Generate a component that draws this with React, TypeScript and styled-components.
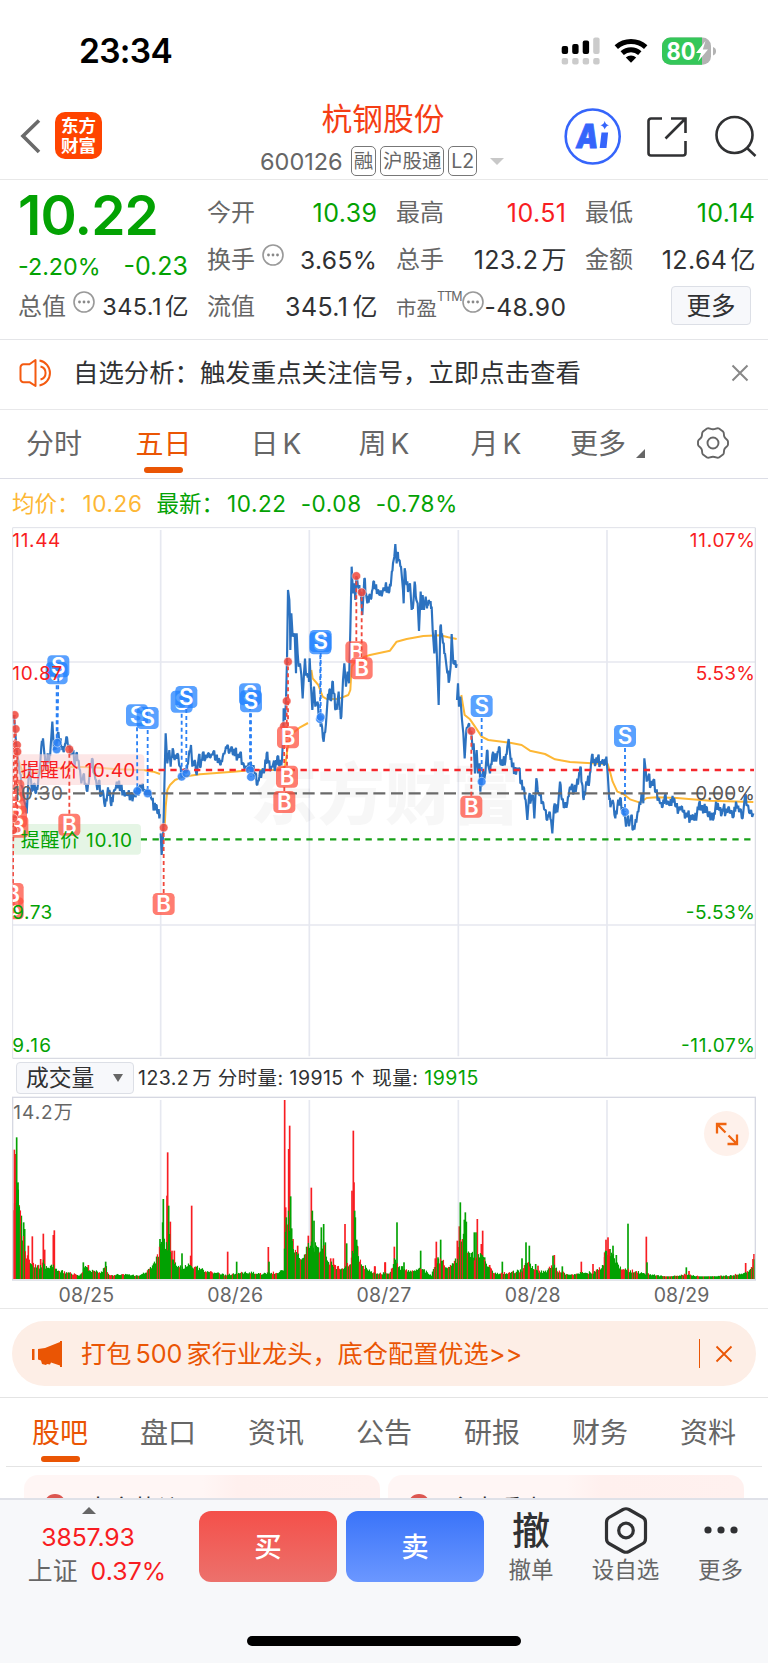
import React from 'react';
import styled, { createGlobalStyle, css } from 'styled-components';

const GREEN = '#03a203';
const RED = '#f81d22';
const ORANGE = '#ea5504';
const INK = '#303133';
const GREY = '#666';

const GlobalStyle = createGlobalStyle`
  body { margin: 0; background: #fff; }
  * { box-sizing: border-box; }
  body, text { font-family: Inter, "Noto Sans CJK SC", sans-serif; }
`;

const Page = styled.div`
  width: 768px;
  height: 1663px;
  overflow: hidden;
  display: flex;
  flex-direction: column;
  color: ${INK};
`;

/* ---------- status bar ---------- */
const StatusBar = styled.div`
  height: 90px;
  padding: 12px 51px 0 79px;
  display: flex;
  align-items: center;
  justify-content: space-between;
`;
const Clock = styled.span`
  font-size: 33.5px;
  font-weight: 600;
  line-height: 40px;
  letter-spacing: -0.7px;
  color: #000;
`;

/* ---------- header ---------- */
const Header = styled.header`
  height: 90px;
  border-bottom: 1px solid #e8e8e8;
  display: grid;
  grid-template-columns: 210px 346px 1fr;
`;
const HeaderLeft = styled.div`
  padding: 22px 0 0 20px;
  display: flex;
  align-items: flex-start;
  gap: 14px;
`;
const Logo = styled.div`
  width: 47px;
  height: 47px;
  border-radius: 10px;
  background: #ff4400;
  color: #fff;
  font-size: 17.5px;
  font-weight: 700;
  line-height: 19.5px;
  text-align: center;
  padding-top: 4px;
`;
const TitleBlock = styled.div`
  display: flex;
  flex-direction: column;
  align-items: center;
  padding-top: 10px;
`;
const Title = styled.h1`
  margin: 0;
  font-size: 30.7px;
  line-height: 38px;
  font-weight: 400;
  color: #f53d14;
`;
const CodeRow = styled.div`
  display: flex;
  align-items: center;
  gap: 4px;
  height: 30px;
  margin: 8px 2px 0 0;
  color: ${GREY};
`;
const Code = styled.span`
  font-size: 23.5px;
  margin-right: 4px;
`;
const Tag = styled.span`
  height: 30px;
  line-height: 28px;
  padding: 0 2px;
  border: 1px solid #777;
  border-radius: 5px;
  font-size: 19.5px;
  letter-spacing: -0.1px;
`;
const Caret = styled.i`
  width: 0;
  height: 0;
  margin-left: 9px;
  border: 7px solid transparent;
  border-top-color: #c8c8c8;
  border-bottom: 0;
`;
const HeaderActions = styled.div`
  padding: 18px 11px 0 8px;
  display: flex;
  align-items: flex-start;
`;

/* ---------- quote ---------- */
const Quote = styled.section`
  height: 160px;
  border-bottom: 1px solid #e4e5e8;
  padding: 0 13px 0 18px;
  display: grid;
  grid-template-columns: 170px 170px 170px 170px;
  column-gap: 19px;
`;
const Main = styled.div`
  display: flex;
  flex-direction: column;
`;
const Price = styled.div`
  height: 60px;
  margin-top: 5px;
  font-size: 55px;
  line-height: 60px;
  font-weight: 600;
  letter-spacing: -0.8px;
  color: ${GREEN};
`;
const Change = styled.div`
  display: flex;
  justify-content: space-between;
  align-items: center;
  height: 34px;
  margin-top: 4px;
  color: ${GREEN};
  font-size: 23.3px;
  span + span { font-size: 25px; }
`;
const Column = styled.div`
  padding-top: 9px;
`;
const Stat = styled.div`
  height: 47px;
  display: flex;
  align-items: center;
  white-space: nowrap;
`;
const StatLabel = styled.span<{ $small?: boolean }>`
  font-size: ${(p) => (p.$small ? 20.5 : 24)}px;
  line-height: 30px;
  color: ${GREY};
  ${(p) => p.$small && css`padding-top: 5px;`}
`;
const StatValue = styled.span<{ $color?: string; $size?: number }>`
  margin-left: auto;
  margin-right: -0.4px;
  font-size: ${(p) => p.$size ?? 25}px;
  line-height: 30px;
  letter-spacing: 0.4px;
  color: ${(p) => p.$color ?? INK};
`;
const Unit = styled.span<{ $gap?: number }>`
  margin-left: ${(p) => p.$gap ?? 3}px;
  letter-spacing: 0;
`;
const Sup = styled.sup`
  font-size: 12.5px;
  letter-spacing: -0.9px;
  line-height: 14px;
  align-self: flex-start;
  margin-top: 7px;
  color: ${GREY};
`;
const MoreButton = styled.button`
  display: block;
  width: 80px;
  height: 39px;
  margin: 3px 4px 0 auto;
  padding: 0;
  border: 1px solid #dcdfe6;
  border-radius: 4px;
  background: #f7f8fb;
  color: ${INK};
  font: 400 24.5px/36px Inter, "Noto Sans CJK SC", sans-serif;
`;

/* ---------- notice ---------- */
const Notice = styled.section`
  height: 70px;
  border-bottom: 1px solid #e8e8ea;
  padding: 0 19px 3px 19px;
  display: flex;
  align-items: center;
`;
const NoticeText = styled.span`
  margin-left: 19px;
  flex: 1;
  font-size: 25.4px;
  line-height: 32px;
`;

/* ---------- tabs ---------- */
const PeriodTabs = styled.nav`
  height: 69px;
  border-bottom: 1px solid #dcdde6;
  display: grid;
  grid-template-columns: 108px 111px 114px 102px 122px 101px 110px;
`;
const SectionTabs = styled.nav`
  height: 69px;
  margin: 0 6px;
  border-bottom: 1px solid #e4e4e4;
  display: grid;
  grid-template-columns: repeat(7, 108px);
`;
const Tab = styled.div<{ $active?: boolean; $drop?: number }>`
  display: flex;
  flex-direction: column;
  align-items: center;
  padding-top: ${(p) => 15 + (p.$drop ?? 0)}px;
  font-size: 28px;
  line-height: 38px;
  color: ${(p) => (p.$active ? ORANGE : GREY)};
  &::after {
    content: '';
    width: 39px;
    height: 6px;
    border-radius: 3px;
    margin-top: 4px;
    background: ${(p) => (p.$active ? ORANGE : 'transparent')};
  }
`;
const MoreTab = styled.div`
  display: flex;
  align-items: flex-start;
  padding: 15px 0 0 13px;
  font-size: 28px;
  line-height: 38px;
  color: ${GREY};
`;
const Corner = styled.i`
  margin: 24px 0 0 10px;
  border-left: 9px solid transparent;
  border-bottom: 9px solid ${GREY};
`;
const GearCell = styled.div`
  display: flex;
  justify-content: center;
  padding-top: 16px;
`;

/* ---------- chart area ---------- */
const Legend = styled.div`
  height: 48px;
  padding: 1px 0 0 12px;
  display: flex;
  align-items: center;
  font-size: 22.5px;
  line-height: 30px;
  color: ${GREEN};
`;
const LegendItem = styled.span<{ $gap: number; $color?: string }>`
  margin-right: ${(p) => p.$gap}px;
  letter-spacing: 0.6px;
  color: ${(p) => p.$color ?? GREEN};
`;
const LegendLabel = styled(LegendItem)`
  letter-spacing: 0;
`;
const ChartWrap = styled.div<{ $h: number }>`
  height: ${(p) => p.$h}px;
  position: relative;
  svg { display: block; }
`;
const VolumeHead = styled.div`
  height: 37px;
  padding: 3px 16px 2px;
  display: flex;
  align-items: center;
  white-space: pre;
  font-size: 19.5px;
  line-height: 28px;
  letter-spacing: 0.45px;
`;
const VolumeSelect = styled.div`
  width: 118px;
  height: 32px;
  margin-right: 4px;
  padding: 0 10px 1px 9px;
  display: flex;
  align-items: center;
  justify-content: space-between;
  border: 1px solid #dcdfe6;
  border-radius: 4px;
  background: #f7f8fb;
  font-size: 22.8px;
  letter-spacing: 0;
`;
const SmallCaret = styled.i`
  border: 5px solid transparent;
  border-top: 8px solid ${GREY};
  border-bottom: 0;
`;
const ExpandButton = styled.div`
  position: absolute;
  right: 19px;
  top: 15px;
  width: 45px;
  height: 45px;
  border-radius: 50%;
  background: #fef1eb;
  display: grid;
  place-items: center;
`;
const Dates = styled.div`
  height: 28px;
  padding: 0 12px;
  border-bottom: 1px solid #e8e8e8;
  display: grid;
  grid-template-columns: repeat(5, 1fr);
  font-size: 19.5px;
  letter-spacing: 0.1px;
  line-height: 28px;
  text-align: center;
  color: ${GREY};
`;

/* ---------- promo ---------- */
const PromoWrap = styled.div`
  height: 89px;
  padding: 12px 12px 11px;
  border-bottom: 1px solid #e4e4e4;
`;
const Promo = styled.div`
  height: 65px;
  border-radius: 33px;
  background: #fdeee6;
  padding: 0 23px 0 19px;
  display: flex;
  align-items: center;
  color: ${ORANGE};
`;
const PromoText = styled.span`
  margin-left: 18px;
  flex: 1;
  font-size: 25.2px;
  line-height: 34px;
`;
const Bar = styled.i`
  width: 1.5px;
  height: 29px;
  margin-right: 15px;
  background: ${ORANGE};
`;

/* ---------- cards ---------- */
const Cards = styled.div`
  height: 31px;
  overflow: hidden;
  padding: 8px 24px 0;
  display: grid;
  grid-template-columns: 1fr 1fr;
  gap: 8px;
`;
const Card = styled.div`
  height: 90px;
  border-radius: 14px;
  background: linear-gradient(90deg, #fff6f5 0%, #fff6f5 50%, #fff0ee 60%, #fff1ef 100%);
  padding: 18px 20px;
  display: flex;
  gap: 20px;
  font-size: 24px;
  line-height: 32px;
  color: ${INK};
`;
const CardDot = styled.i`
  width: 22px;
  height: 22px;
  margin-top: 1px;
  border-radius: 50%;
  background: #dc5650;
`;

/* ---------- bottom bar ---------- */
const Bottom = styled.footer`
  height: 165px;
  border-top: 2px solid #dfe1e8;
  background: #f7f8fa;
  display: flex;
  flex-direction: column;
`;
const Actions = styled.div`
  height: 136px;
  display: grid;
  grid-template-columns: 199px 138px 147px 94px 95px 1fr;
`;
const IndexBox = styled.div`
  padding: 7px 5px 0 0;
  display: flex;
  flex-direction: column;
  align-items: center;
  color: ${RED};
  font-size: 24.8px;
  line-height: 34px;
`;
const UpCaret = styled.i`
  margin: 0 17px 6px 0;
  border: 7px solid transparent;
  border-bottom-color: ${GREY};
  border-top: 0;
`;
const IndexValue = styled.span`
  margin-right: 18px;
  height: 34px;
  letter-spacing: -0.1px;
`;
const IndexLine = styled.div`
  display: flex;
  gap: 13px;
  letter-spacing: 0.1px;
  b { font-weight: 400; color: ${GREY}; }
`;
const Trade = styled.button<{ $buy?: boolean }>`
  height: 71px;
  margin: 11px 0 0 ${(p) => (p.$buy ? 0 : 9)}px;
  width: 138px;
  border: 0;
  padding: 1px 0 0;
  border-radius: 12px;
  color: #fff;
  font: 500 27.5px/70px Inter, "Noto Sans CJK SC", sans-serif;
  background: ${(p) =>
    p.$buy ? 'linear-gradient(#f4504a, #ec716c)' : 'linear-gradient(#3a74f9, #6b97ff)'};
`;
const Tool = styled.div`
  display: flex;
  flex-direction: column;
  align-items: center;
  padding-top: 6px;
  font-size: 22.5px;
  line-height: 32px;
  color: ${GREY};
`;
const ToolIcon = styled.div`
  height: 48px;
  display: flex;
  align-items: center;
  font-size: 38px;
  font-weight: 500;
  color: ${INK};
`;
const HomeIndicator = styled.div`
  width: 274px;
  height: 10px;
  border-radius: 5px;
  background: #000;
  align-self: center;
`;

/* ---------- chart data ---------- */
type Pt = [number, number];
const parse = (s: string, dx = 0, dy = 0): Pt[] =>
  s.trim().split(/\s+/).map((p) => {
    const [x, y] = p.split(',').map(Number);
    return [x + dx, y + dy];
  });

const priceDays: Pt[][] = [
  parse('42,585 46,640 50,690 54,720 60,760 66,800 75,850 80,880 88,730 92,770 96,815 102,790 108,820 114,790 120,740 124,680 129,655 133,700 138,750 143,700 147,730 152,680 157,605 162,690 168,680 173,640 180,660 186,685 193,690 199,650 206,680 214,700 220,690 224,740 229,700 234,720 240,750 244,790 250,765 256,790 262,815 268,770 276,715 282,760 288,780 292,810 297,780 302,830 308,810 315,860 322,820 328,810 334,858 340,820 348,800 355,790 362,805 370,815 376,825 384,820 392,832 400,828 410,815 418,810 426,795 433,812 440,820 448,810 456,840 463,865 468,855 474,880 480,882'),
  parse('482,940 485,1005 489,950 491,890 494,760 497,640 502,730 508,690 512,740 518,685 524,720 532,700 540,740 546,770 552,750 560,755 566,710 573,675 577,740 584,720 590,765 597,705 602,740 608,700 616,718 624,700 632,712 640,695 648,718 656,715 662,735 668,712 676,690 682,675 688,700 694,680 700,705 706,690 712,715 720,700 728,730 736,745 744,740 750,735 758,745 766,760 772,795 778,770 786,755 794,750 800,700 806,725 812,750 820,730 826,745 832,710 840,735 846,720 850,640 851,565 855,600 858,540 861,420 864,210 868,240 870,300 871,390 874,280 878,350 884,340 888,460 890,340 893,400 896,440 900,430 904,465 908,535 912,460 915,416 918,466 926,466 927,486 929,415 933,500 937,570 942,500 946,560 952,545 958,600 964,610 971,665 978,610 982,550 988,510 994,540 997,485 1002,520 1007,570 1012,550 1016,515 1019,570 1024,590 1029,480 1033,430 1038,500 1043,455 1047,490 1051,330 1055,140 1059,220 1063,190 1066,240 1069,170 1076,205 1082,215 1087,285 1093,175 1098,220 1102,250 1108,225 1114,235 1120,185 1126,205 1133,210 1140,225 1148,215 1156,200 1162,205 1168,215 1174,175 1179,130 1183,110 1186,72 1190,130 1192,100 1197,120 1203,140 1209,210 1211,250 1214,145 1220,195 1226,205 1230,190 1235,270 1240,250 1244,185 1249,240 1253,250 1257,333 1262,215 1265,270 1268,225 1272,270 1277,230 1281,265 1286,240 1290,250 1295,260 1298,330 1303,400 1307,330 1310,390 1316,555 1321,320 1326,340 1329,370 1335,400 1342,460 1348,480 1352,440 1355,342 1360,430 1364,432 1370,432'),
  parse('1371,540 1374,490 1377,560 1381,530 1386,600 1390,640 1394,715 1399,630 1405,615 1412,635'),
];
priceDays[2].push(
  ...parse('34,275 38,330 41,310 45,400 50,330 54,400 59,370 61,455 66,410 76,400 81,330 86,380 90,400 97,345 104,355 111,350 117,320 123,375 130,360 136,365 142,320 146,297 152,360 158,375 164,395 170,390 177,385 183,430 190,440 197,480 202,540 207,470 213,480 219,465 223,535 229,415 235,460 240,465 247,485 255,510 262,540 268,515 273,540 277,580 282,500 288,510 294,500 300,425 306,480 314,500 322,490 328,450 334,440 342,455 350,435 356,415 361,380 366,430 371,480 377,440 383,420 388,425 393,370 396,345 401,365 407,370 414,350 420,375 427,360 434,375 439,350 443,400 448,480 453,495 458,480 466,535 472,500 480,475 487,510 494,520 498,560 503,530 508,555 514,525 519,570 525,555 531,530 537,500 543,480 548,460 550,490 553,355 557,390 560,425 566,405 572,440 580,420 588,455 595,475 602,490 608,500 614,470 622,485 630,495 636,480 641,475 648,500 656,510 664,500 670,515 677,530 684,520 690,540 697,525 704,540 711,520 717,490 724,505 732,510 738,500 746,530 754,525 761,535 766,505 772,490 778,510 786,520 791,500 797,520 804,505 812,515 821,530 828,485 832,505 840,508 848,535 855,465 862,495 870,520 880,520', 1380, 360),
);

const averages: Pt[][] = [
  parse('54,715 60,735 75,775 95,760 150,748 210,740 280,742 350,748 430,750 460,755 480,762'),
  parse('494,920 497,860 502,810 510,795 525,780 550,770 600,763 700,755 760,750 830,750 855,740 862,690 872,645 900,622 924,609'),
  parse('124,450 128,475 145,495 158,530 170,537 200,537 215,533 235,525 241,510 245,440 260,418 300,405 360,392 380,365 410,357 460,348 510,346 535,352 560,357', 810),
  parse('4,165 8,190 14,225 30,238 45,260 65,290 85,300 150,308 185,315 210,332 255,342 285,358 330,366 395,370 437,372 443,372 450,395 458,425 472,455 490,462 510,478 540,488 560,474 590,472 650,474 750,482 880,486', 1380, 360),
];

const rand = (seed: number) => {
  let s = seed;
  return () => {
    s = (s * 16807) % 2147483647;
    return s / 2147483647;
  };
};

/* Fills the gaps between sampled prices with minute-level jitter. */
const jitter = (pts: Pt[], seed: number): Pt[] => {
  const r = rand(seed);
  const out: Pt[] = [];
  pts.forEach((p, i) => {
    out.push(p);
    const n = pts[i + 1];
    if (n && Math.abs(n[1] - p[1]) < 60 && n[0] - p[0] > 4) {
      const a = 4 + r() * 11;
      const w = n[0] - p[0];
      out.push([p[0] + w * 0.33, p[1] * 0.67 + n[1] * 0.33 - a]);
      out.push([p[0] + w * 0.66, p[1] * 0.34 + n[1] * 0.66 + a]);
    }
  });
  return out;
};
const line = (pts: Pt[]) => pts.map((p) => p.map((v) => v.toFixed(1)).join(',')).join(' ');

const volumeEnvelope = [
  ...parse('38,240 50,250 60,190 70,110 80,60 100,45 120,35 130,50 140,30 160,40 170,25 210,18 240,10 255,40 270,25 300,20 318,35 326,10 370,15 410,10 440,20 460,40 480,90 495,110 510,100 520,50 540,35 570,40 600,30 630,20 680,12 740,20 790,15 835,20 850,30 856,160 868,180 880,90 900,60 920,85 935,120 950,80 970,110 980,60 1000,40 1030,25 1055,60 1065,110 1080,50 1100,30 1130,15 1170,20 1184,60 1199,35'),
  ...parse('120,25 160,30 190,12 205,45 220,60 235,35 265,60 275,100 290,130 300,70 325,70 345,65 360,35 385,15 430,20 460,25 480,50 500,25 530,20 557,40 570,25 600,12 640,18 680,20 705,40 715,90 740,60 760,30 800,22 840,15 900,6 955,15 1000,6 1090,10 1130,20 1145,25 1162,60', 1104),
];
const redSpikes = [
  ...parse('43,388 46,375 57,222 60,197 85,100 97,128 122,60 130,136 134,88 160,132 163,146 265,42 501,250 503,380 511,172 516,85 523,85 575,220 572,70 683,82 805,96 854,537 857,215 866,390 869,460 879,120 893,100 925,130 934,274 992,62 1000,62 1035,165 1056,265 1060,445 1062,290 1073,98 1125,38 1156,50'),
  ...parse('20,38 51,50 79,97 205,112 202,62 268,115 274,158 284,120 328,180 340,105 344,145 365,42 510,40 559,72 640,52 675,45 710,80 714,118 720,125 835,127 963,24 1133,48 1155,60 1158,75', 1104),
];
const greenSpikes = [
  ...parse('50,425 54,290 64,190 71,170 74,150 250,50 317,52 480,120 488,170 490,240 506,220 508,135 546,77 710,52 807,52 859,185 872,248 875,152 937,205 942,175 955,95 964,155 971,165 976,110 1040,107 1064,205 1066,185 1070,118 1191,170'),
  ...parse('108,50 158,85 218,118 210,65 277,230 289,178 292,200 295,172 310,78 319,140 324,140 350,65 403,52 462,62 474,110 484,100 503,45 555,70 583,38 726,90 735,100 745,72 780,166 837,50 955,35', 1104),
];

interface VolumeBar { x: number; h: number; up: boolean; }
const envelopeAt = (x: number) => {
  const i = volumeEnvelope.findIndex((p) => p[0] >= x);
  if (i <= 0) return volumeEnvelope[0][1];
  const [a, b] = [volumeEnvelope[i - 1], volumeEnvelope[i]];
  return a[1] + ((b[1] - a[1]) * (x - a[0])) / (b[0] - a[0]);
};
const buildVolume = (): VolumeBar[] => {
  const r = rand(77);
  const bars: VolumeBar[] = [];
  for (let x = 40; x < 2264; x += 3) {
    const up = r() < 0.28;
    bars.push({ x, h: Math.max(8, envelopeAt(x) * (0.8 + r() * 0.42)), up });
  }
  return bars;
};
const volumeBars = buildVolume();

interface Mark { x: number; y: number; dotX: number; dotY: number; }
const sells: Mark[] = [
  { x: 170, y: 460, dotX: 170, dotY: 688 },
  { x: 175, y: 439, dotX: 172, dotY: 668 },
  { x: 411, y: 586, dotX: 412, dotY: 813 },
  { x: 443, y: 594, dotX: 443, dotY: 820 },
  { x: 545, y: 545, dotX: 545, dotY: 770 },
  { x: 559, y: 531, dotX: 559, dotY: 760 },
  { x: 750, y: 523, dotX: 750, dotY: 750 },
  { x: 753, y: 544, dotX: 753, dotY: 771 },
  { x: 961, y: 370, dotX: 960, dotY: 597 },
  { x: 962, y: 363, dotX: 962, dotY: 591 },
  { x: 1445, y: 558, dotX: 1445, dotY: 785 },
  { x: 1875, y: 648, dotX: 1875, dotY: 876 },
];
const buys: Mark[] = [
  { x: 40, y: 812, dotX: 44, dotY: 585 },
  { x: 44, y: 850, dotX: 47, dotY: 627 },
  { x: 48, y: 890, dotX: 51, dotY: 675 },
  { x: 52, y: 920, dotX: 52, dotY: 695 },
  { x: 38, y: 1165, dotX: 40, dotY: 930 },
  { x: 38, y: 1122, dotX: 40, dotY: 895 },
  { x: 208, y: 914, dotX: 208, dotY: 688 },
  { x: 491, y: 1152, dotX: 491, dotY: 923 },
  { x: 853, y: 846, dotX: 852, dotY: 618 },
  { x: 861, y: 770, dotX: 860, dotY: 543 },
  { x: 864, y: 652, dotX: 864, dotY: 425 },
  { x: 1069, y: 397, dotX: 1069, dotY: 168 },
  { x: 1085, y: 445, dotX: 1085, dotY: 217 },
  { x: 1414, y: 860, dotX: 1414, dotY: 633 },
];

const Marker = ({ m, buy }: { m: Mark; buy?: boolean }) => {
  const c = buy ? '#f0483c' : '#2a80f5';
  const end = buy ? m.y - 33 : m.y + 36;
  return (
    <g>
      <line x1={m.x} y1={end} x2={m.dotX} y2={m.dotY} stroke={c} strokeWidth={5.5} strokeDasharray="12 9" />
      <circle cx={m.dotX} cy={m.dotY} r={13} fill={c} fillOpacity={0.85} stroke="#fff" strokeOpacity={0.7} strokeWidth={2} />
      <rect x={m.x - 33} y={m.y - 33} width={66} height={66} rx={13} fill={buy ? '#ff4f40' : '#1f80ff'} fillOpacity={0.74} />
      <text x={m.x} y={m.y + 24} textAnchor="middle" fontSize={67} fontWeight={600} fill="#fff">{buy ? 'B' : 'S'}</text>
    </g>
  );
};

const PriceChart = () => (
  <svg width="768" height="532" viewBox="0 21 2304 1596">
    <defs>
      <clipPath id="plot"><rect x="38" y="24" width="2230" height="1590" /></clipPath>
    </defs>
    <g fill="none" stroke="#e6e8f0" strokeWidth={5}>
      {[482, 928, 1375, 1821].map((x) => <line key={x} x1={x} x2={x} y1={30} y2={1609} />)}
      <path d="M38 426H2266M38 1215H2266" />
    </g>
    <path d="M38 1615V23H2266" fill="none" stroke="#dfe1e8" strokeWidth={3} />
    <path d="M2266 23V1615H38" fill="none" stroke="#d8dae2" strokeWidth={3.5} />
    <text x="750" y="898" fontSize="202" fontWeight="900" fill="#000" fillOpacity="0.03">东方财富</text>
    {averages.map((a, i) => (
      <polyline key={i} points={line(a)} fill="none" stroke="#fdb735" strokeWidth={6} strokeLinejoin="round" />
    ))}
    {priceDays.map((d, i) => (
      <polyline key={i} points={line(jitter(d, 11 + i))} fill="none" stroke="#2c72c0" strokeWidth={6.5} strokeLinejoin="bevel" />
    ))}
    <line x1="60" x2="2200" y1="820" y2="820" stroke="#6a6a6a" strokeWidth={7} strokeDasharray="36 17" />
    <line x1="440" x2="2262" y1="750" y2="750" stroke="#f5282d" strokeWidth={7} strokeDasharray="19 16.5" />
    <line x1="422" x2="2262" y1="958" y2="958" stroke="#18a018" strokeWidth={7} strokeDasharray="19 16.5" />
    <rect x="38" y="703" width="395" height="92" rx="12" fill="#fbd6d6" fillOpacity="0.6" />
    <rect x="38" y="912" width="385" height="92" rx="12" fill="#dcf1dc" fillOpacity="0.75" />
    <g clipPath="url(#plot)">
      {sells.map((m, i) => <Marker key={i} m={m} />)}
      {buys.map((m, i) => <Marker key={i} m={m} buy />)}
    </g>
    <g fontSize="57">
      <text x="62" y="771" fill={RED} textLength="344">提醒价 10.40</text>
      <text x="62" y="980" fill={GREEN} textLength="334">提醒价 10.10</text>
      <text x="37" y="81" fill={RED} textLength="144">11.44</text>
      <text x="37" y="479" fill={RED} textLength="150">10.87</text>
      <text x="37" y="839" fill="#666" textLength="152">10.30</text>
      <text x="37" y="1196" fill={GREEN} textLength="120">9.73</text>
      <text x="37" y="1595" fill={GREEN} textLength="116">9.16</text>
      <g textAnchor="end">
        <text x="2265" y="81" fill={RED} textLength="196">11.07%</text>
        <text x="2265" y="479" fill={RED} textLength="178">5.53%</text>
        <text x="2265" y="839" fill="#555" textLength="179">0.00%</text>
        <text x="2265" y="1196" fill={GREEN} textLength="208">-5.53%</text>
        <text x="2265" y="1595" fill={GREEN} textLength="222">-11.07%</text>
      </g>
    </g>
  </svg>
);

const VolumeChart = () => (
  <svg width="768" height="185" viewBox="0 168 2304 555">
    <g stroke="#e6e8f0" strokeWidth={5}>
      {[482, 928, 1375, 1821].map((x) => <line key={x} x1={x} x2={x} y1={180} y2={718} />)}
    </g>
    {redSpikes.map(([x, h], i) => <rect key={i} x={x - 2.5} y={717 - h} width={5} height={h} fill={RED} />)}
    {greenSpikes.map(([x, h], i) => <rect key={i} x={x - 2.5} y={717 - h} width={5} height={h} fill={GREEN} />)}
    {volumeBars.map((b) => (
      <rect key={b.x} x={b.x - 1.5} y={717 - b.h} width={3.6} height={b.h} fill={b.up ? RED : GREEN} />
    ))}
    <rect x="38" y="172" width="2228" height="548" fill="none" stroke="#d6d8e2" strokeWidth={4} />
    <text x="40" y="237" fontSize="57" fill={GREY} textLength="178">14.2万</text>
  </svg>
);

/* ---------- icons ---------- */
const StatusIcons = () => (
  <svg width="156" height="30" viewBox="561 36 156 30">
    {[46, 44, 40.5, 37.5].map((y, i) => (
      <g key={y}>
        <rect x={561.7 + i * 10.5} y={y} width="6.4" height={54 - y} rx="2" fill={i < 3 ? '#000' : '#cbcbcb'} />
        <rect x={561.7 + i * 10.5} y="58" width="6.4" height="6.4" rx="2" fill="#cbcbcb" />
      </g>
    ))}
    <g fill="none" stroke="#000" strokeWidth="5">
      <path d="M616.3 47.2a21.8 21.8 0 0 1 29.4 0" />
      <path d="M622.2 53.2a13.3 13.3 0 0 1 17.6 0" />
    </g>
    <path d="M631 62.8l-5.2-5.3a7.6 7.6 0 0 1 10.4 0z" />
    <clipPath id="batt"><rect x="662" y="37.5" width="49" height="27.3" rx="8.5" /></clipPath>
    <g clipPath="url(#batt)">
      <rect x="662" y="37" width="50" height="28" fill="#b3b3b3" />
      <rect x="662" y="37" width="40" height="28" fill="#34c759" />
    </g>
    <path d="M713 47v8.5c2-.6 3-2.3 3-4.25s-1-3.65-3-4.25z" fill="#b3b3b3" />
    <text x="666.5" y="60" fontSize="24.5" fontWeight="700" fill="#fff" textLength="29" lengthAdjust="spacingAndGlyphs">80</text>
    <path d="M705.5 41l-9.5 12h5l-3 8.5 10-12h-5.2z" fill="#fff" />
  </svg>
);
const BackIcon = () => (
  <svg width="21" height="47" viewBox="0 0 21 47" fill="none" stroke="#6a6a6a" strokeWidth="3.6">
    <path d="M19 8.5L3 24l16 16" />
  </svg>
);
const AiIcon = () => (
  <svg width="57" height="57" viewBox="564 107.5 57 57">
    <circle cx="592.7" cy="136" r="27" fill="none" stroke="#3565fb" strokeWidth="2.6" />
    <text transform="translate(575 147.5) skewX(-8)" fontSize="33" fontWeight="900" fill="#3565fb" stroke="#3565fb" strokeWidth="0.8" textLength="22" lengthAdjust="spacingAndGlyphs">A</text>
    <path d="M601.5 132h6.6l-1.6 15.5h-6.8zM604.7 120.5q1 3.8 4.3 4.3-3.3.8-4.3 4.3-1-3.5-4.3-4.3 3.3-.5 4.3-4.3z" fill="#3565fb" />
  </svg>
);
const HeaderIcon = styled.svg<{ $x: number; $y: number }>`
  margin: ${(p) => p.$y}px 0 0 ${(p) => p.$x}px;
  flex: none;
`;
const ShareIcon = () => (
  <HeaderIcon $x={25} $y={8} width="41" height="41" viewBox="0 0 41 41" fill="none" stroke={INK} strokeWidth="2.6">
    <path d="M16 2.5H5A2.5 2.5 0 0 0 2.5 5v32A2.5 2.5 0 0 0 5 39.5h32a2.5 2.5 0 0 0 2.5-2.5V25M25 2.5h14.5v14.5M39 3L19.5 22.5" />
  </HeaderIcon>
);
const SearchIcon = () => (
  <HeaderIcon $x={28} $y={7} width="42" height="42" viewBox="0 0 42 42" fill="none" stroke={INK} strokeWidth="2.6">
    <circle cx="19.5" cy="20" r="18" />
    <path d="M32 33l8.5 8" />
  </HeaderIcon>
);
const InfoSvg = styled.svg<{ $tight?: boolean }>`
  margin: -10px 0 0 ${(p) => (p.$tight ? 0 : 7)}px;
  flex: none;
`;
const Info = ({ tight }: { tight?: boolean }) => (
  <InfoSvg $tight={tight} width="22" height="22" viewBox="0 0 22 22">
    <circle cx="11" cy="11" r="10" fill="none" stroke="#999" strokeWidth="1.6" />
    {[6.5, 11, 15.5].map((x) => <circle key={x} cx={x} cy="11" r="1.4" fill="#888" />)}
  </InfoSvg>
);
const SpeakerIcon = () => (
  <svg width="35" height="30" viewBox="0 0 35 30" fill="none" stroke="#f45a10" strokeWidth="2" strokeLinejoin="round">
    <path d="M16.5 2v26l-6-3.8H4.5a3 3 0 0 1-3-3V9.3a3 3 0 0 1 3-3h6zM21.5 8.5a6.7 6.7 0 0 1 0 13M20.5 2.5a12.7 12.7 0 0 1 0 25" />
  </svg>
);
const CloseIcon = ({ color, w }: { color: string; w: number }) => (
  <svg width="18" height="18" viewBox="0 0 18 18" fill="none" stroke={color} strokeWidth={w}>
    <path d="M1.5 1.5l15 15M16.5 1.5l-15 15" />
  </svg>
);
const GearIcon = () => (
  <svg width="34" height="34" viewBox="0 0 34 34" fill="none" stroke={GREY} strokeWidth="1.9" strokeLinejoin="round">
    <path d="M11 2.5c2-1.2 3 .8 6 .8s4-2 6-.8l4 3c1.7 1.5.2 3.2 1.5 5.5S32 13.5 32 15.5v3c0 2-2.3 2-3.500 4.500s.2 4-1.500 5.500l-4 3c-2 1.200-3-.8-6-.8s-4 2-6 .8l-4-3C5.300 27 6.800 25.300 5.500 23S2 20.500 2 18.500v-3c0-2 2.300-2 3.500-4.500S5.300 7 7 5.500z" />
    <circle cx="17" cy="17" r="5.5" />
  </svg>
);
const ExpandIcon = () => (
  <svg width="24" height="24" viewBox="0 0 24 24" fill="none" stroke="#ef6410" strokeWidth="2.3">
    <path d="M2 11.5V2h9.5M2 2l8.5 8.5M22 12.5V22h-9.5M22 22l-8.5-8.5" />
  </svg>
);
const HornIcon = () => (
  <svg width="32" height="28" viewBox="0 0 32 28" fill={ORANGE}>
    <path d="M1 9h2.5v11H1zM7 9l7-1L29 2V1h2v26h-2v-1.5L20 22.5l-1 2-3-.5-1 1-4-1-1-3.5-3-1z" />
  </svg>
);
const HexIcon = () => (
  <svg width="44" height="47" viewBox="0 0 44 47" fill="none" stroke={INK} strokeWidth="3.2" strokeLinejoin="round">
    <path d="M19 2.5q3-1.5 6 0l14 8q2.5 1.5 2.5 5v16q0 3.5-2.5 5l-14 8q-3 1.5-6 0l-14-8q-2.5-1.5-2.5-5v-16q0-3.5 2.5-5z" />
    <circle cx="22" cy="23.5" r="7.3" />
  </svg>
);
const DotsIcon = () => (
  <svg width="34" height="10" viewBox="0 0 34 10" fill={INK}>
    {[4, 17, 30].map((x) => <circle key={x} cx={x} cy="5" r="3.6" />)}
  </svg>
);

const KTab = ({ prefix }: { prefix: string }) => (
  <Tab><span>{prefix}<Unit $gap={4}>K</Unit></span></Tab>
);

export default function App() {
  return (
    <Page>
      <GlobalStyle />
      <StatusBar>
        <Clock>23:34</Clock>
        <StatusIcons />
      </StatusBar>

      <Header>
        <HeaderLeft>
          <BackIcon />
          <Logo>东方<br />财富</Logo>
        </HeaderLeft>
        <TitleBlock>
          <Title>杭钢股份</Title>
          <CodeRow>
            <Code>600126</Code>
            <Tag>融</Tag>
            <Tag>沪股通</Tag>
            <Tag>L2</Tag>
            <Caret />
          </CodeRow>
        </TitleBlock>
        <HeaderActions>
          <AiIcon />
          <ShareIcon />
          <SearchIcon />
        </HeaderActions>
      </Header>

      <Quote>
        <Main>
          <Price>10.22</Price>
          <Change><span>-2.20%</span><span>-0.23</span></Change>
          <Stat>
            <StatLabel>总值</StatLabel><Info />
            <StatValue $size={23.5}>345.1<Unit $gap={3}>亿</Unit></StatValue>
          </Stat>
        </Main>
        <Column>
          <Stat><StatLabel>今开</StatLabel><StatValue $color={GREEN}>10.39</StatValue></Stat>
          <Stat><StatLabel>换手</StatLabel><Info /><StatValue $size={24.6}>3.65%</StatValue></Stat>
          <Stat><StatLabel>流值</StatLabel><StatValue>345.1<Unit $gap={4}>亿</Unit></StatValue></Stat>
        </Column>
        <Column>
          <Stat><StatLabel>最高</StatLabel><StatValue $color={RED}>10.51</StatValue></Stat>
          <Stat><StatLabel>总手</StatLabel><StatValue>123.2<Unit>万</Unit></StatValue></Stat>
          <Stat>
            <StatLabel $small>市盈</StatLabel><Sup>TTM</Sup><Info tight />
            <StatValue $size={24.6}>-48.90</StatValue>
          </Stat>
        </Column>
        <Column>
          <Stat><StatLabel>最低</StatLabel><StatValue $color={GREEN}>10.14</StatValue></Stat>
          <Stat><StatLabel>金额</StatLabel><StatValue>12.64<Unit>亿</Unit></StatValue></Stat>
          <MoreButton>更多</MoreButton>
        </Column>
      </Quote>

      <Notice>
        <SpeakerIcon />
        <NoticeText>自选分析：触发重点关注信号，立即点击查看</NoticeText>
        <CloseIcon color="#888" w={2} />
      </Notice>

      <PeriodTabs>
        <Tab>分时</Tab>
        <Tab $active>五日</Tab>
        <KTab prefix="日" />
        <KTab prefix="周" />
        <KTab prefix="月" />
        <MoreTab>更多<Corner /></MoreTab>
        <GearCell><GearIcon /></GearCell>
      </PeriodTabs>

      <Legend>
        <LegendLabel $gap={3} $color="#fdb735">均价：</LegendLabel>
        <LegendItem $gap={14} $color="#fdb735">10.26</LegendItem>
        <LegendLabel $gap={3}>最新：</LegendLabel>
        <LegendItem $gap={14}>10.22</LegendItem>
        <LegendItem $gap={14}>-0.08</LegendItem>
        <LegendItem $gap={0}>-0.78%</LegendItem>
      </Legend>

      <ChartWrap $h={532}><PriceChart /></ChartWrap>

      <VolumeHead>
        <VolumeSelect>成交量<SmallCaret /></VolumeSelect>
        <span>123.2<Unit>万</Unit> 分时量: 19915 ↑ 现量: <LegendItem $gap={0}>19915</LegendItem></span>
      </VolumeHead>

      <ChartWrap $h={185}>
        <VolumeChart />
        <ExpandButton><ExpandIcon /></ExpandButton>
      </ChartWrap>

      <Dates>
        {['08/25', '08/26', '08/27', '08/28', '08/29'].map((d) => <span key={d}>{d}</span>)}
      </Dates>

      <PromoWrap>
        <Promo>
          <HornIcon />
          <PromoText>打包<Unit $gap={4}>500</Unit><Unit $gap={4}>家行业龙头，底仓配置优选&gt;&gt;</Unit></PromoText>
          <Bar />
          <CloseIcon color={ORANGE} w={1.8} />
        </Promo>
      </PromoWrap>

      <SectionTabs>
        {['股吧', '盘口', '资讯', '公告', '研报', '财务', '资料'].map((t, i) => (
          <Tab key={t} $active={i === 0} $drop={1}>{t}</Tab>
        ))}
      </SectionTabs>

      <Cards>
        <Card><CardDot />大家热议</Card>
        <Card><CardDot />主力看点</Card>
      </Cards>

      <Bottom>
        <Actions>
          <IndexBox>
            <UpCaret />
            <IndexValue>3857.93</IndexValue>
            <IndexLine><b>上证</b>0.37%</IndexLine>
          </IndexBox>
          <Trade $buy>买</Trade>
          <Trade>卖</Trade>
          <Tool><ToolIcon>撤</ToolIcon>撤单</Tool>
          <Tool><ToolIcon><HexIcon /></ToolIcon>设自选</Tool>
          <Tool><ToolIcon><DotsIcon /></ToolIcon>更多</Tool>
        </Actions>
        <HomeIndicator />
      </Bottom>
    </Page>
  );
}
